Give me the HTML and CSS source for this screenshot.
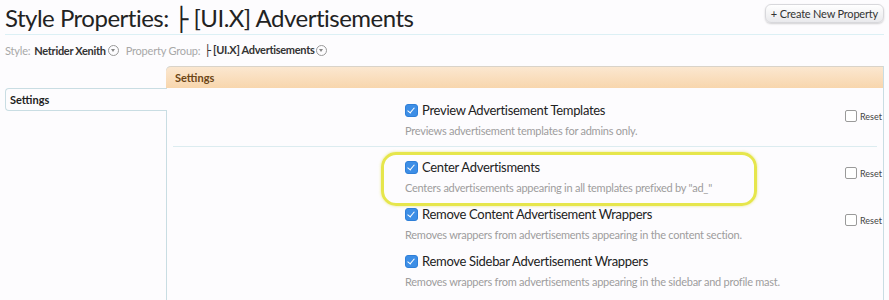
FILE: index.html
```html
<!DOCTYPE html>
<html>
<head>
    <title>Style Properties</title>
    <link rel="stylesheet" href="styles.css">
</head>
<body>
    <div class="title-bar">
        <h1>Style Properties: <span class="tree">├</span> [UI.X] Advertisements</h1>
        <button class="create-btn">+ Create New Property</button>
    </div>

    <div class="crumbs">
        <span class="crumb-label">Style:</span>
        <span class="crumb-value">Netrider Xenith</span>
        <span class="crumb-menu"></span>
        <span class="crumb-label group">Property Group:</span>
        <span class="crumb-value"><span class="tree-small">├</span> [UI.X] Advertisements</span>
        <span class="crumb-menu"></span>
    </div>

    <div class="layout">
        <div class="tabs">
            <div class="tab active">Settings</div>
        </div>

        <div class="panel">
            <div class="panel-head">Settings</div>

            <div class="row first">
                <div class="row-label"></div>
                <div class="row-control">
                    <label class="option"><span class="check on"></span>Preview Advertisement Templates</label>
                    <p class="hint">Previews advertisement templates for admins only.</p>
                </div>
                <label class="reset"><span class="check"></span>Reset</label>
            </div>

            <div class="row highlighted">
                <div class="row-label"></div>
                <div class="row-control">
                    <label class="option"><span class="check on"></span>Center Advertisments</label>
                    <p class="hint">Centers advertisements appearing in all templates prefixed by "ad_"</p>
                </div>
                <label class="reset"><span class="check"></span>Reset</label>
                <div class="marker"></div>
            </div>

            <div class="row">
                <div class="row-label"></div>
                <div class="row-control">
                    <label class="option"><span class="check on"></span>Remove Content Advertisement Wrappers</label>
                    <p class="hint">Removes wrappers from advertisements appearing in the content section.</p>
                </div>
                <label class="reset"><span class="check"></span>Reset</label>
            </div>

            <div class="row">
                <div class="row-label"></div>
                <div class="row-control">
                    <label class="option"><span class="check on"></span>Remove Sidebar Advertisement Wrappers</label>
                    <p class="hint">Removes wrappers from advertisements appearing in the sidebar and profile mast.</p>
                </div>
                <div class="reset"></div>
            </div>
        </div>
    </div>
</body>
</html>
```

FILE: styles.css
```css
body {
    font-family: Lato, "Open Sans", sans-serif;
    margin: 0;
    padding: 0 5px;
    background-color: #fdfcfe;
    color: #222;
    overflow: hidden;
}

.title-bar {
    display: flex;
    justify-content: space-between;
    align-items: flex-start;
    height: 34px;
    border-bottom: 1px solid #dcf0f5;
}

h1 {
    margin: 0;
    padding-top: 3px;
    font-size: 24px;
    font-weight: normal;
    letter-spacing: -0.5px;
    color: #222;
}

.tree {
    font-family: "DejaVu Sans", sans-serif;
    font-size: 23px;
}

.create-btn {
    margin-top: 4px;
    height: 19px;
    padding: 0 5px;
    font-family: inherit;
    font-size: 11px;
    letter-spacing: -0.2px;
    color: #333;
    background: linear-gradient(#ffffff, #e9e9ec);
    border: 1px solid #d8d8dc;
    border-radius: 6px;
    box-shadow: 0 1px 2px rgba(0, 0, 0, 0.18);
}

.crumbs {
    display: flex;
    align-items: center;
    height: 22px;
    margin-top: 4px;
    font-size: 11px;
    letter-spacing: -0.2px;
}

.crumb-label {
    color: #a8a8a8;
    margin-right: 4px;
}

.crumb-label.group {
    margin-left: 7px;
}

.crumb-value {
    font-weight: bold;
    color: #333;
    letter-spacing: -0.3px;
}

.tree-small {
    font-family: "DejaVu Sans", sans-serif;
    font-weight: normal;
}

.crumb-menu {
    display: inline-block;
    position: relative;
    width: 9px;
    height: 9px;
    margin-left: 2px;
    border: 1px solid #999;
    border-radius: 50%;
}

.crumb-menu::after {
    content: "";
    position: absolute;
    left: 2px;
    top: 3px;
    border-left: 2.5px solid transparent;
    border-right: 2.5px solid transparent;
    border-top: 3px solid #888;
}

.layout {
    display: flex;
    margin-top: 5px;
}

.tabs {
    width: 161px;
    padding-top: 22px;
    flex-shrink: 0;
}

.tab {
    position: relative;
    z-index: 1;
    height: 21px;
    margin-right: -1px;
    padding-left: 4px;
    line-height: 21px;
    font-size: 11px;
    font-weight: bold;
    color: #222;
    background: #fdfcfe;
    border: 1px solid #c9dde3;
    border-right: none;
    border-radius: 4px 0 0 4px;
}

.panel {
    flex: 1;
    height: 240px;
    border-left: 1px solid #c9dde3;
    border-right: 1px solid #c9dde3;
    border-top-left-radius: 5px;
}

.panel-head {
    height: 21px;
    line-height: 21px;
    padding-left: 9px;
    font-size: 11px;
    font-weight: bold;
    color: #6b4516;
    background: linear-gradient(#fbe7d0, #f8d6ad);
    border-top: 1px solid #d9d3c9;
    border-top-left-radius: 5px;
    margin-left: -1px;
}

.row {
    position: relative;
    display: grid;
    grid-template-columns: 238px 1fr 38px;
    height: 47px;
}

.row.first {
    height: 58px;
    margin: 0 6px;
    border-bottom: 1px solid #dcecf0;
    grid-template-columns: 232px 1fr 32px;
}

.row-control {
    padding-top: 13px;
}

.row.first .row-control {
    padding-top: 15px;
}

.row.first .reset {
    padding-top: 22px;
}

.option {
    display: flex;
    align-items: center;
    font-size: 13px;
    letter-spacing: -0.3px;
    color: #222;
    height: 14px;
}

.hint {
    margin: 7px 0 0;
    font-size: 11px;
    letter-spacing: -0.25px;
    color: #9d9d9d;
}

.check {
    display: inline-block;
    width: 10px;
    height: 10px;
    margin-right: 4px;
    background: #fff;
    border: 1px solid #9a9a9a;
    border-radius: 2px;
    flex-shrink: 0;
}

.check.on {
    position: relative;
    width: 11px;
    height: 11px;
    border: 1px solid #2f7fd8;
    background: #3d8ee6;
    border-radius: 3px;
}

.check.on::after {
    content: "";
    position: absolute;
    left: 3px;
    top: 1px;
    width: 3px;
    height: 6px;
    border-right: 1.5px solid #fff;
    border-bottom: 1.5px solid #fff;
    transform: rotate(40deg);
}

.reset {
    display: flex;
    align-items: center;
    height: 12px;
    padding-top: 20px;
    font-size: 9px;
    color: #444;
}

.reset .check {
    margin-right: 3px;
}

.marker {
    position: absolute;
    left: 214px;
    top: 5px;
    width: 370px;
    height: 48px;
    border: 3px solid #e6e64c;
    border-radius: 15px;
    box-shadow: 0 0 3px rgba(220, 220, 60, 0.6);
    pointer-events: none;
}
```
